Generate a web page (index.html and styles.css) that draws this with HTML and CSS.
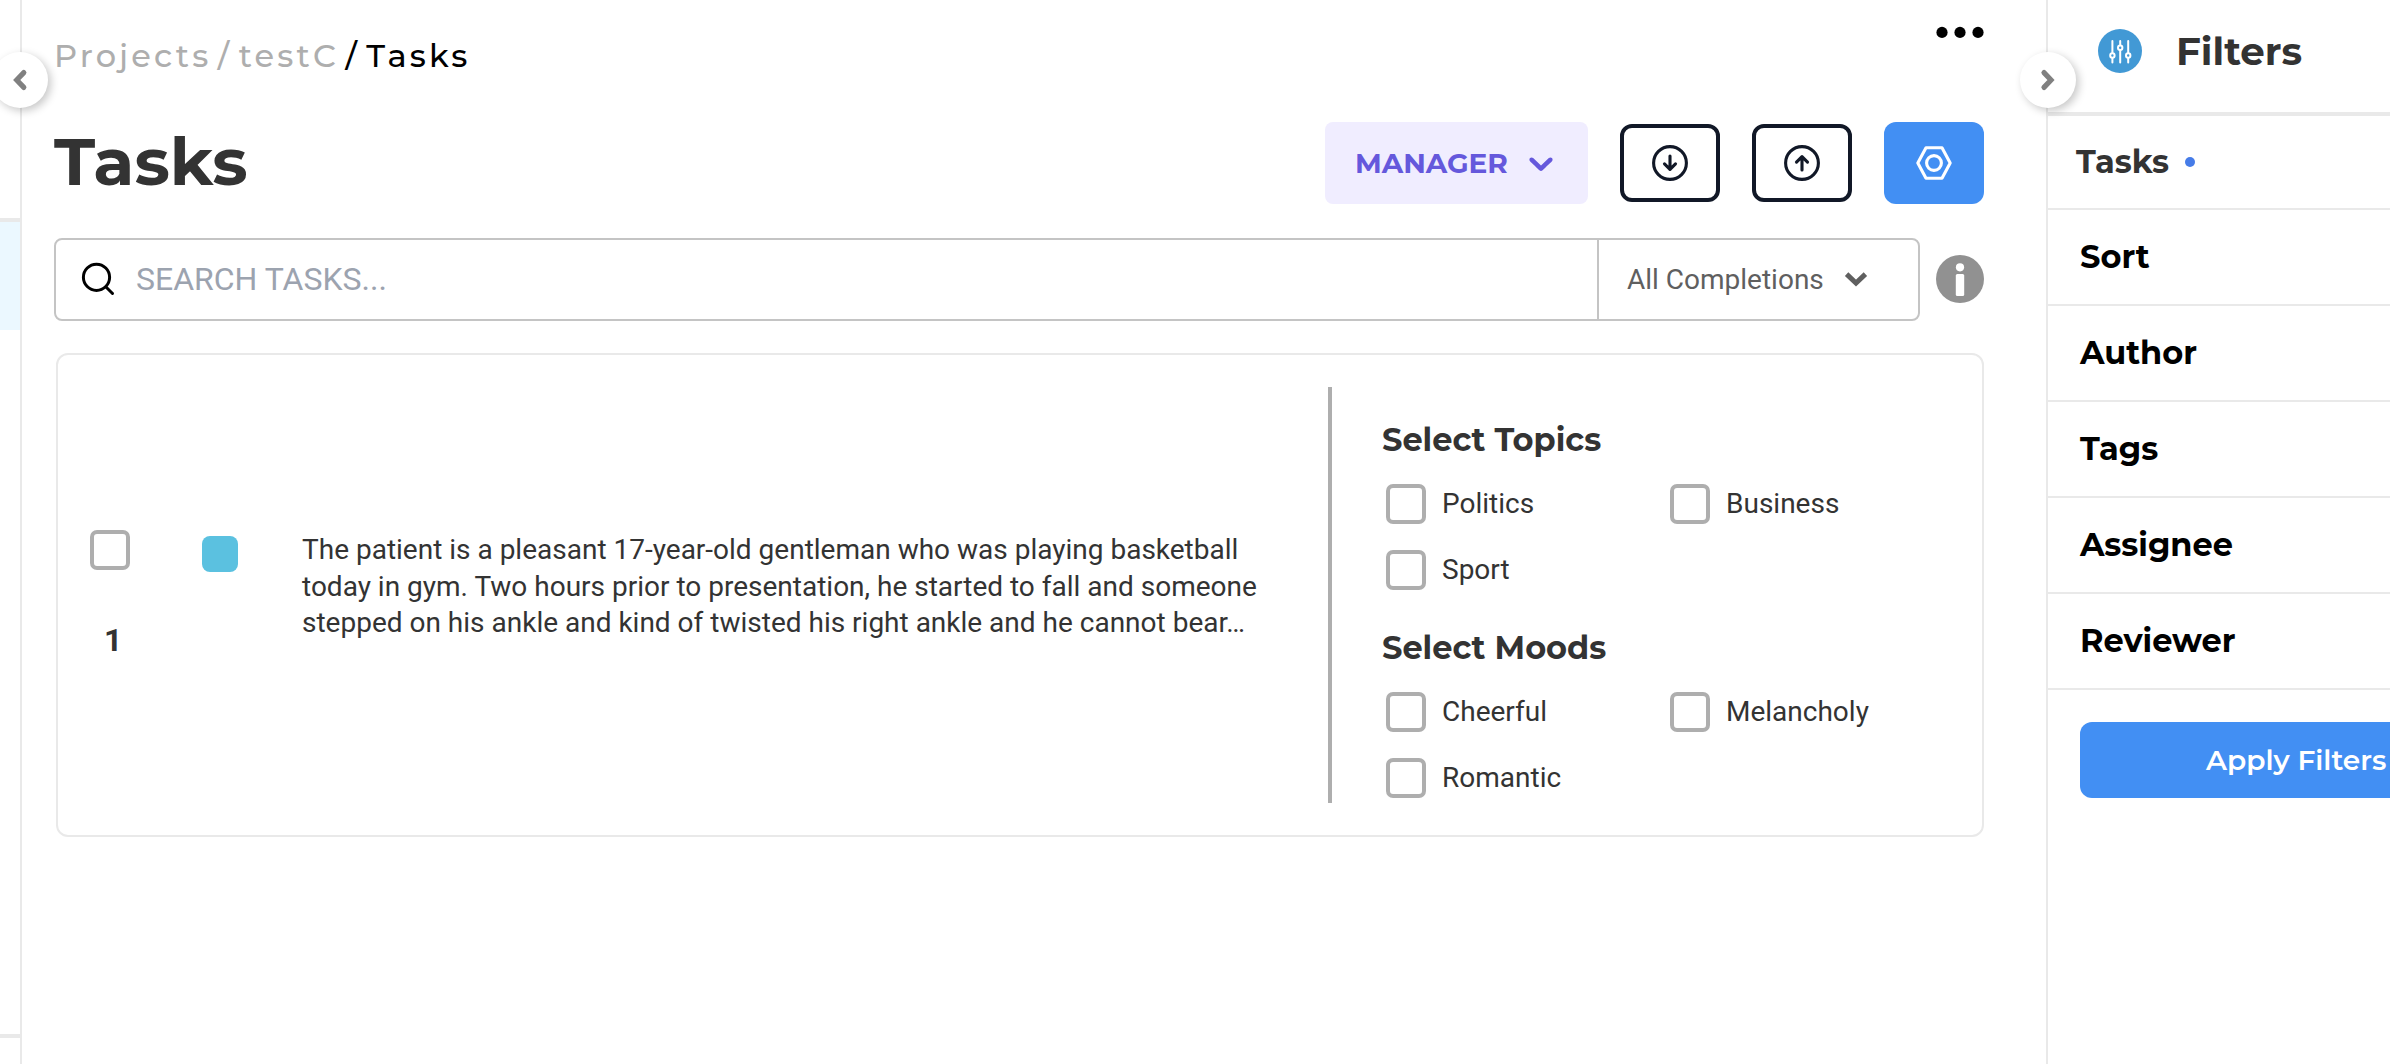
FILE: index.html
```html
<!DOCTYPE html>
<html lang="en">
<head>
<meta charset="utf-8">
<title>Tasks</title>
<link rel="stylesheet" href="styles.css">
</head>
<body>
<div class="app">
  <nav class="sidebar">
    <div class="sidebar-top"></div>
    <div class="sidebar-active"></div>
    <div class="sidebar-rest"></div>
    <div class="sidebar-foot"></div>
    <button class="toggle toggle-left" aria-label="Collapse menu">
      <svg class="toggle-icon" viewBox="0 0 56 56"><path d="M31.8 20.6 24.7 28l7.1 7.4"/></svg>
    </button>
  </nav>

  <main class="main">
    <div class="topbar">
      <div class="breadcrumb">
        <a class="crumb">Projects</a><span class="crumb">/</span><a class="crumb">testC</a><span class="crumb crumb-current">/</span><span class="crumb crumb-current">Tasks</span>
      </div>
      <svg class="more" viewBox="0 0 48 12"><circle cx="6" cy="6.400" r="5.600"/><circle cx="24" cy="6.400" r="5.600"/><circle cx="42" cy="6.400" r="5.600"/></svg>
    </div>

    <div class="title-row">
      <h1 class="title">Tasks</h1>
      <div class="actions">
        <button class="role">MANAGER
          <svg class="role-chevron" viewBox="0 0 20 20"><path d="M4.516 7.548c.436-.446 1.043-.481 1.576 0L10 11.295l3.908-3.747c.533-.481 1.141-.446 1.574 0 .436.445.408 1.197 0 1.615-.406.418-4.695 4.502-4.695 4.502-.217.223-.502.335-.787.335s-.57-.112-.789-.335c0 0-4.287-4.084-4.695-4.502s-.436-1.17 0-1.615z"/></svg>
        </button>
        <button class="tool" aria-label="Import">
          <svg class="tool-icon" viewBox="-20 -20 40 40"><circle r="16.4"/><path d="M0-7V6.500M-5.500.800 0 6.300 5.500.800"/></svg>
        </button>
        <button class="tool" aria-label="Export">
          <svg class="tool-icon" viewBox="-20 -20 40 40"><circle r="16.4"/><path d="M0 7V-6.500M-5.500-.800 0-6.300 5.500-.800"/></svg>
        </button>
        <button class="tool tool-primary" aria-label="Setup">
          <svg class="tool-icon" viewBox="-20 -20 40 40"><path d="M-16.200 0-8-15.200H8L16.200 0 8 15.200H-8Z"/><circle r="7.400"/></svg>
        </button>
      </div>
    </div>

    <div class="search-row">
      <div class="search">
        <svg class="search-icon" viewBox="0 0 34 34"><circle cx="15.500" cy="15.300" r="13.100"/><path d="m25 25 6.500 6.500"/></svg>
        <span class="placeholder">SEARCH TASKS...</span>
        <div class="completions">
          <span>All Completions</span>
          <svg class="completions-chevron" viewBox="0 0 24 16"><path d="M2.600 3.200 12 12l9.400-8.800"/></svg>
        </div>
      </div>
      <svg class="info" viewBox="0 0 48 48"><circle cx="24" cy="24" r="24" fill="#919191"/><circle cx="24" cy="12.300" r="4.100" fill="#fff"/><rect x="19.800" y="19" width="8.400" height="22" rx="1.500" fill="#fff"/></svg>
    </div>

    <article class="card">
      <div class="card-select">
        <span class="box"></span>
        <span class="card-number">1</span>
      </div>
      <span class="tag"></span>
      <p class="card-text">The patient is a pleasant 17-year-old gentleman who was playing basketball today in gym. Two hours prior to presentation, he started to fall and someone stepped on his ankle and kind of twisted his right ankle and he cannot bear…</p>
      <div class="choices">
        <section class="group">
          <h2 class="group-title">Select Topics</h2>
          <div class="options">
            <label class="option"><span class="box"></span>Politics</label>
            <label class="option"><span class="box"></span>Business</label>
            <label class="option"><span class="box"></span>Sport</label>
          </div>
        </section>
        <section class="group">
          <h2 class="group-title">Select Moods</h2>
          <div class="options">
            <label class="option"><span class="box"></span>Cheerful</label>
            <label class="option"><span class="box"></span>Melancholy</label>
            <label class="option"><span class="box"></span>Romantic</label>
          </div>
        </section>
      </div>
    </article>
  </main>

  <aside class="filters">
    <button class="toggle toggle-right" aria-label="Collapse filters">
      <svg class="toggle-icon" viewBox="0 0 56 56"><path d="M24 20.600 31 28l-7 7.400"/></svg>
    </button>
    <header class="filters-head">
      <svg class="filters-icon" viewBox="0 0 44 44">
        <circle cx="22" cy="22" r="22" fill="#4299d5"/>
        <g class="sliders"><path d="M14.400 12v21.500M22.200 12v21.500M30.200 12v21.500"/><circle cx="14.400" cy="26.500" r="2.200"/><circle cx="22.200" cy="18.700" r="2.200"/><circle cx="30.200" cy="26.500" r="2.200"/></g>
      </svg>
      <span class="filters-title">Filters</span>
    </header>
    <div class="filter filter-first">Tasks<span class="dot"></span></div>
    <div class="filter">Sort</div>
    <div class="filter">Author</div>
    <div class="filter">Tags</div>
    <div class="filter">Assignee</div>
    <div class="filter">Reviewer</div>
    <button class="apply">Apply Filters</button>
  </aside>
</div>
</body>
</html>
```
FILE: styles.css
```css
* { box-sizing: border-box; }

body {
  margin: 0;
  background: #fff;
  color: #333;
  font: 400 28px/40px Roboto, sans-serif;
}

button {
  border: 0;
  padding: 0;
  font: inherit;
}

svg { display: block; flex: none; }

.app {
  display: flex;
  height: 1064px;
}

/* Left menu */
.sidebar {
  position: relative;
  display: flex;
  flex-direction: column;
  flex: none;
  width: 22px;
  border-right: 2px solid #e9e9e9;
}
.sidebar-top { height: 222px; border-bottom: 4px solid #e9e9e9; }
.sidebar-active { height: 108px; background: #ebf8ff; }
.sidebar-rest { flex: 1; }
.sidebar-foot { height: 30px; border-top: 4px solid #e9e9e9; }

.toggle {
  position: absolute;
  top: 52px;
  z-index: 1;
  width: 56px;
  height: 56px;
  border-radius: 50%;
  background: #fff;
  box-shadow: 3px 3px 8px rgba(0, 0, 0, 0.22);
}
.toggle-left { left: -8px; }
.toggle-right { left: -28px; }
.toggle-icon {
  width: 56px;
  height: 56px;
  fill: none;
  stroke: #808080;
  stroke-width: 5.2;
  stroke-linecap: round;
}

/* Main column */
.main {
  flex: none;
  width: 2024px;
  padding: 0 62px 0 32px;
}

.topbar {
  display: flex;
  justify-content: space-between;
  align-items: flex-start;
  height: 122px;
}
.breadcrumb {
  display: flex;
  gap: 6.4px;
  padding-top: 36px;
  font: 500 32px/40px Montserrat, Inter, sans-serif;
  letter-spacing: 3.2px;
}
.crumb { color: #aeaeae; }
.crumb-current { color: #000; }
.more { width: 48px; height: 12px; margin-top: 26px; }

.title-row {
  display: flex;
  justify-content: space-between;
  height: 82px;
}
.title {
  margin: 0;
  font: 700 66.6px/80px Montserrat, Inter, sans-serif;
}
.actions { display: flex; align-items: center; gap: 32px; }
.role {
  display: flex;
  align-items: center;
  gap: 13px;
  width: 263px;
  height: 82px;
  padding-left: 30px;
  border-radius: 8px;
  background: #f0edff;
  color: #6558dc;
  font: 700 28px/40px Montserrat, Inter, sans-serif;
}
.role-chevron { width: 40px; height: 40px; fill: #6558dc; }
.tool {
  display: flex;
  align-items: center;
  justify-content: center;
  width: 100px;
  height: 78px;
  border: 4px solid #111827;
  border-radius: 12px;
  background: #fff;
  color: #111827;
}
.tool-primary {
  height: 82px;
  border: 0;
  background: #428ff3;
  color: #fff;
}
.tool-icon {
  width: 40px;
  height: 40px;
  fill: none;
  stroke: currentColor;
  stroke-width: 3.1;
  stroke-linecap: round;
  stroke-linejoin: round;
}

/* Search */
.search-row {
  display: flex;
  align-items: center;
  gap: 16px;
  margin-top: 34px;
}
.search {
  display: flex;
  align-items: center;
  flex: 1;
  height: 83px;
  border: 2px solid #c4c4c4;
  border-radius: 8px;
  padding-left: 25px;
}
.search-icon {
  width: 34px;
  height: 34px;
  margin-bottom: 1px;
  fill: none;
  stroke: #000;
  stroke-width: 3;
  stroke-linecap: round;
}
.placeholder {
  flex: 1;
  padding: 0 0 2px 21px;
  font-size: 32px;
  color: #9ca3af;
}
.completions {
  display: flex;
  align-items: center;
  gap: 20px;
  width: 321px;
  height: 100%;
  padding-left: 28px;
  border-left: 2px solid #c4c4c4;
  color: #5f5f5f;
}
.completions-chevron {
  width: 24px;
  height: 16px;
  margin-bottom: 1px;
  fill: none;
  stroke: #5f5f5f;
  stroke-width: 5;
}
.info { width: 48px; height: 48px; margin-bottom: 1px; }

/* Task card */
.card {
  display: flex;
  align-items: flex-start;
  height: 484px;
  margin: 32px 0 0 2px;
  padding: 32px;
  border: 2px solid #e9e9e9;
  border-radius: 12px;
}
.box {
  flex: none;
  width: 40px;
  height: 40px;
  border: 4px solid #aeaeae;
  border-radius: 7px;
}
.card-select {
  display: flex;
  flex: none;
  flex-direction: column;
  gap: 51px;
  margin-top: 143px;
}
.card-number {
  padding-left: 14px;
  font: 700 32px/38px Roboto, sans-serif;
}
.tag {
  flex: none;
  width: 36px;
  height: 36px;
  margin: 149px 0 0 72px;
  border-radius: 8px;
  background: #5bc1e0;
}
.card-text {
  flex: none;
  width: 970px;
  margin: 145px 56px 0 64px;
  line-height: 36.5px;
}
.choices {
  flex: 1;
  min-width: 0;
  border-left: 4px solid #aeaeae;
  padding-left: 50px;
}
.group { height: 208px; padding-top: 33px; }
.group-title {
  margin: 0 0 24px;
  font: 700 32px/40px Montserrat, Inter, sans-serif;
}
.options {
  display: grid;
  grid-template-columns: 284px 1fr;
  gap: 26px 0;
  padding-left: 4px;
}
.option {
  display: flex;
  gap: 16px;
  line-height: 39px;
}

/* Filters panel */
.filters {
  position: relative;
  flex: 1;
  border-left: 2px solid #e9e9e9;
  font: 700 32px/40px Montserrat, Inter, sans-serif;
  color: #000;
}
.filters-head {
  display: flex;
  align-items: center;
  gap: 34px;
  height: 116px;
  padding: 0 0 10px 50px;
  border-bottom: 4px solid #e9e9e9;
  color: #333;
}
.filters-icon { width: 44px; height: 44px; }
.sliders {
  fill: #4299d5;
  stroke: #fff;
  stroke-width: 2;
  stroke-linecap: round;
}
.filters-title { font-size: 38.8px; }
.filter {
  display: flex;
  align-items: center;
  height: 96px;
  padding-left: 32px;
  border-bottom: 2px solid #e9e9e9;
}
.filter-first {
  gap: 16px;
  height: 94px;
  padding-left: 28px;
  color: #333;
}
.dot {
  width: 10px;
  height: 10px;
  border-radius: 50%;
  background: #467ce8;
}
.apply {
  display: flex;
  align-items: center;
  width: 310px;
  height: 76px;
  margin: 32px 0 0 32px;
  padding-left: 126px;
  border-radius: 12px 0 0 12px;
  background: #428ff3;
  color: #fff;
  font-size: 28px;
  font-weight: 600;
  white-space: nowrap;
}
```
